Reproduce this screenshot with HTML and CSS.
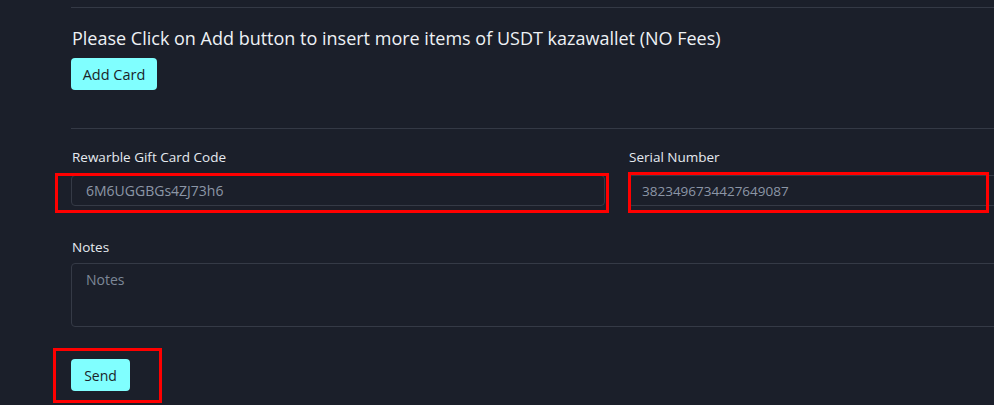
FILE: index.html
```html
<!DOCTYPE html>
<html lang="en">
<head>
<meta charset="utf-8">
<title>Add Card</title>
<link rel="stylesheet" href="styles.css">
</head>
<body>
<div class="page">
  <form class="form">
    <div class="divider"></div>
    <p class="intro">Please Click on Add button to insert more items of USDT kazawallet (NO Fees)</p>
    <button type="button" class="btn btn-add">Add Card</button>
    <div class="divider divider-2"></div>
    <div class="row">
      <div class="field">
        <label class="label">Rewarble Gift Card Code</label>
        <input class="input input-code" type="text" value="6M6UGGBGs4ZJ73h6">
      </div>
      <div class="field">
        <label class="label">Serial Number</label>
        <input class="input" type="text" value="3823496734427649087">
      </div>
    </div>
    <div class="field field-notes">
      <label class="label">Notes</label>
      <textarea class="textarea" placeholder="Notes"></textarea>
    </div>
    <button type="button" class="btn btn-send">Send</button>
  </form>
  <div class="mark mark-code"></div>
  <div class="mark mark-serial"></div>
  <div class="mark mark-send"></div>
</div>
</body>
</html>
```
FILE: styles.css
```css
html, body {
  margin: 0;
  padding: 0;
  background: #1b1f2a;
  overflow: hidden;
}
body {
  font-family: "Open Sans", "DejaVu Sans", sans-serif;
  color: #e6eaf0;
}
.page {
  position: relative;
  width: 994px;
  height: 405px;
  overflow: hidden;
}
.form {
  width: 1091px;
  padding: 7px 0 0 71px;
  display: flex;
  flex-direction: column;
  align-items: flex-start;
}
.divider {
  align-self: stretch;
  height: 1px;
  background: #343945;
}
.intro {
  margin: 18px 0 0 1px;
  font-size: 18px;
  line-height: 25px;
  color: #eef1f5;
}
.btn {
  border: 0;
  border-radius: 4px;
  background: #80ffff;
  color: #1b1f2a;
  font-family: inherit;
  font-size: 14px;
  height: 32px;
  padding: 0;
  white-space: nowrap;
  cursor: pointer;
}
.btn-add {
  margin-top: 7px;
  width: 86px;
  font-size: 14.5px;
}
.divider-2 {
  margin-top: 38px;
}
.row {
  align-self: stretch;
  display: grid;
  grid-template-columns: 534px 1fr;
  column-gap: 23px;
  margin-top: 19px;
}
.field {
  display: flex;
  flex-direction: column;
  align-items: stretch;
}
.label {
  font-size: 13.5px;
  line-height: 18px;
  margin-left: 1px;
  color: #e6eaf0;
}
.input {
  margin-top: 9px;
  height: 31px;
  box-sizing: border-box;
  border: 1px solid #353a46;
  border-radius: 4px;
  background: #1b1f2a;
  color: #8c96a6;
  font-family: inherit;
  font-size: 13.5px;
  padding: 0 13px;
  outline: none;
}
.input-code {
  font-size: 14px;
  padding: 0 14px;
}
.field-notes {
  align-self: stretch;
  margin-top: 32px;
}
.textarea {
  margin-top: 7px;
  height: 64px;
  box-sizing: border-box;
  border: 1px solid #353a46;
  border-radius: 4px;
  background: #1b1f2a;
  color: #8c96a6;
  font-family: inherit;
  font-size: 14px;
  line-height: 19px;
  padding: 6px 14px;
  resize: none;
  outline: none;
}
.textarea::placeholder {
  color: #7d8797;
}
.btn-send {
  margin-top: 32px;
  width: 59px;
}
.mark {
  position: absolute;
  border: 3px solid #ff0000;
  box-sizing: border-box;
}
.mark-code {
  left: 55px;
  top: 173px;
  width: 554px;
  height: 40px;
}
.mark-serial {
  left: 628px;
  top: 172px;
  width: 361px;
  height: 41px;
}
.mark-send {
  left: 53px;
  top: 348px;
  width: 109px;
  height: 55px;
}
```
